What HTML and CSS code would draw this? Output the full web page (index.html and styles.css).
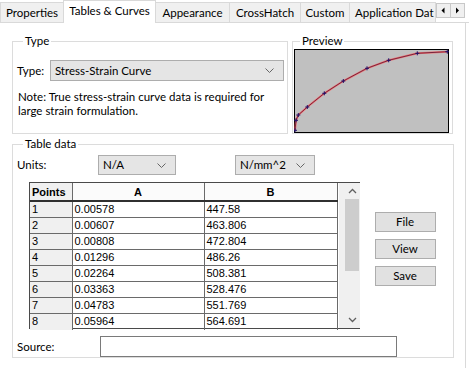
FILE: index.html
```html
<!DOCTYPE html>
<html>
<head>
<meta charset="utf-8">
<link rel="stylesheet" href="styles.css">
</head>
<body>
<div class="tabbar">
  <div class="tab w1">Properties</div>
  <div class="tab active w2">Tables &amp; Curves</div>
  <div class="tab w3">Appearance</div>
  <div class="tab w4">CrossHatch</div>
  <div class="tab w5">Custom</div>
  <div class="tab w6">Application Dat</div>
  <div class="arrows">
    <span class="arr"><svg width="15" height="15" viewBox="0 0 15 15"><path d="M8.5 4.5 L5.5 7.5 L8.5 10.5 Z" fill="#000"/></svg></span>
    <span class="arr"><svg width="15" height="15" viewBox="0 0 15 15"><path d="M6 4.5 L9 7.5 L6 10.5 Z" fill="#000"/></svg></span>
  </div>
</div>
<div class="panel">
  <div class="top-row">
    <fieldset class="grp type-grp">
      <legend>Type</legend>
      <div class="type-row">
        <span class="lbl type-lbl">Type:</span>
        <div class="select type-sel"><span>Stress-Strain Curve</span><svg class="chev" width="9" height="5" viewBox="0 0 9 5"><path d="M0.5 0.5 L4.5 4.5 L8.5 0.5" fill="none" stroke="#666" stroke-width="1"/></svg></div>
      </div>
      <p class="note">Note: True stress-strain curve data is required for<br>large strain formulation.</p>
    </fieldset>
    <fieldset class="grp preview-grp">
      <legend>Preview</legend>
      <svg class="graph" width="155" height="84" viewBox="0 0 155 84">
        <rect x="0.5" y="0.5" width="154" height="83" fill="#c0c0c0" stroke="#000" stroke-width="1"/>
        <polyline points="1,81.3 2,71.3 4.3,66 13.3,58 30.3,44.3 49.3,32 73,19.3 94.7,11.3 123.3,4.3 153.3,2.7" fill="none" stroke="#ff5a5a" stroke-width="2" stroke-opacity="0.75"/>
        <polyline points="1,81.3 2,71.3 4.3,66 13.3,58 30.3,44.3 49.3,32 73,19.3 94.7,11.3 123.3,4.3 153.3,2.7" fill="none" stroke="#5a1030" stroke-width="0.8"/>
        <g stroke="#20106a" stroke-width="1">
          <path d="M-1 81.3h4M1 79.3v4"/>
          <path d="M0 71.3h4M2 69.3v4"/>
          <path d="M2.3 66h4M4.3 64v4"/>
          <path d="M11.3 58h4M13.3 56v4"/>
          <path d="M28.3 44.3h4M30.3 42.3v4"/>
          <path d="M47.3 32h4M49.3 30v4"/>
          <path d="M71 19.3h4M73 17.3v4"/>
          <path d="M92.7 11.3h4M94.7 9.3v4"/>
          <path d="M121.3 4.3h4M123.3 2.3v4"/>
          <path d="M151.3 2.7h4M153.3 0.7v4"/>
        </g>
      </svg>
    </fieldset>
  </div>
  <fieldset class="grp table-grp">
    <legend>Table data</legend>
    <div class="units-row">
      <span class="lbl units-lbl">Units:</span>
      <div class="select na-sel"><span>N/A</span><svg class="chev" width="9" height="5" viewBox="0 0 9 5"><path d="M0.5 0.5 L4.5 4.5 L8.5 0.5" fill="none" stroke="#666" stroke-width="1"/></svg></div>
      <div class="select nmm-sel"><span>N/mm^2</span><svg class="chev" width="9" height="5" viewBox="0 0 9 5"><path d="M0.5 0.5 L4.5 4.5 L8.5 0.5" fill="none" stroke="#666" stroke-width="1"/></svg></div>
    </div>
    <div class="table-area">
      <div class="grid-wrap">
        <table class="grid">
          <colgroup><col class="c-pts"><col class="c-a"><col class="c-b"></colgroup>
          <thead>
            <tr><th class="h-pts">Points</th><th>A</th><th>B</th></tr>
          </thead>
          <tbody>
            <tr><td class="pt">1</td><td>0.00578</td><td>447.58</td></tr>
            <tr><td class="pt">2</td><td>0.00607</td><td>463.806</td></tr>
            <tr><td class="pt">3</td><td>0.00808</td><td>472.804</td></tr>
            <tr><td class="pt">4</td><td>0.01296</td><td>486.26</td></tr>
            <tr><td class="pt">5</td><td>0.02264</td><td>508.381</td></tr>
            <tr><td class="pt">6</td><td>0.03363</td><td>528.476</td></tr>
            <tr><td class="pt">7</td><td>0.04783</td><td>551.769</td></tr>
            <tr><td class="pt">8</td><td>0.05964</td><td>564.691</td></tr>
          </tbody>
        </table>
        <div class="vscroll">
          <svg class="sarrow" width="22" height="16" viewBox="0 0 22 16"><path d="M10 10 L13.5 6.5 L17 10" fill="none" stroke="#606060" stroke-width="1.3"/></svg>
          <div class="thumb"></div>
          <div class="track-rest"></div>
          <svg class="sarrow" width="22" height="16" viewBox="0 0 22 16"><path d="M10 6 L13.5 9.5 L17 6" fill="none" stroke="#606060" stroke-width="1.3"/></svg>
        </div>
      </div>
      <div class="btn-col">
        <button class="btn">File</button>
        <button class="btn">View</button>
        <button class="btn">Save</button>
      </div>
    </div>
    <div class="source-row">
      <span class="lbl source-lbl">Source:</span>
      <div class="input"></div>
    </div>
  </fieldset>
</div>
</body>
</html>
```

FILE: styles.css
```css
* { box-sizing: border-box; }
html, body {
  margin: 0;
  padding: 0;
  background: #ffffff;
}
body {
  width: 469px;
  height: 368px;
  overflow: hidden;
  font-family: Lato, "Noto Sans", sans-serif;
  font-size: 11.5px;
  color: #000;
}

/* tabs */
.tabbar {
  display: flex;
  align-items: flex-end;
  height: 23px;
  width: 469px;
  border-bottom: 1px solid #d9d9d9;
  position: relative;
}
.tab {
  height: 20px;
  background: #f0f0f0;
  border: 1px solid #d9d9d9;
  border-bottom: none;
  margin-right: -1px;
  display: flex;
  align-items: center;
  justify-content: center;
  white-space: nowrap;
  overflow: hidden;
  font-size: 11.5px;
  line-height: 16px;
  padding-top: 1px;
}
.tab.active {
  height: 23px;
  background: #fff;
  margin-bottom: -1px;
  position: relative;
  z-index: 1;
  padding-top: 0;
  padding-bottom: 2px;
}
.w1 { width: 64px; }
.w2 { width: 93px; }
.w3 { width: 75px; }
.w4 { width: 72px; }
.w5 { width: 50px; }
.w6 { width: 87px; justify-content: flex-start; padding-left: 5px; }
.arrows {
  display: flex;
  align-self: flex-start;
  margin-top: 3px;
  margin-left: 1px;
}
.arr {
  width: 15px;
  height: 15px;
  background: #f0f0f0;
  border: 1px solid #c8c8c8;
  margin-right: -1px;
  display: block;
}
.arr svg { display: block; margin: -1px; }

/* panel */
.panel {
  width: 466px;
  height: 345px;
  border-right: 1px solid #d9d9d9;
  padding: 10px 0 0 12px;
}
.top-row {
  display: flex;
  gap: 4px;
  height: 101px;
}
.grp {
  margin: 0;
  border: 1px solid #dcdcdc;
  padding: 0;
  min-width: 0;
}
.grp legend {
  padding: 0 2px;
  margin-left: 6px;
  font-size: 11.5px;
  line-height: 16px;
}
.type-grp {
  width: 276px;
  padding: 11px 3px 0 4px;
}
.type-row {
  display: flex;
  align-items: center;
}
.lbl {
  font-size: 11.5px;
  line-height: 16px;
}
.type-lbl { width: 33px; }
.select {
  height: 21px;
  background: #e5e5e5;
  border: 1px solid #adadad;
  display: flex;
  align-items: center;
  justify-content: space-between;
  padding: 0 9px 0 4px;
  font-size: 11.5px;
  line-height: 16px;
}
.type-sel { width: 235px; }
.chev { display: block; }
.note {
  margin: 9px 0 0 1px;
  font-size: 11.5px;
  line-height: 14px;
  white-space: nowrap;
}
.preview-grp {
  width: 161px;
  padding: 0 0 0 1px;
}
.graph { display: block; }

/* table data */
.table-grp {
  width: 442px;
  height: 222px;
  margin-top: 2px;
  padding: 3px 0 0 4px;
}
.units-row {
  display: flex;
  align-items: center;
  height: 20px;
}
.units-lbl { width: 81px; }
.na-sel { width: 78px; height: 20px; }
.nmm-sel { width: 80px; height: 20px; margin-left: 59px; }
.table-area {
  display: flex;
  margin-top: 7px;
  margin-left: 12px;
}
.grid-wrap {
  display: flex;
  border: 1px solid #4a4a4a;
  border-right: none;
  height: 147px;
}
.grid {
  border-collapse: collapse;
  table-layout: fixed;
  width: 307px;
  font-family: "Liberation Sans", Arial, sans-serif;
  font-size: 11px;
}
.c-pts { width: 42px; }
.c-a { width: 132px; }
.c-b { width: 133px; }
.grid th {
  height: 18px;
  padding: 0 2px;
  font-weight: bold;
  background: #fbfbfb;
  border: 1px solid #6a6a6a;
  border-top: none;
  border-bottom: 2px solid #303030;
  text-align: center;
  line-height: 16px;
}
.grid th.h-pts { background: #f0f0f0; text-align: left; border-left: none; }
.grid td {
  height: 16px;
  padding: 0 0 0 2px;
  border: 1px solid #6a6a6a;
  line-height: 15px;
  white-space: nowrap;
  overflow: hidden;
}
.grid td.pt { background: #f0f0f0; border-left: none; }
.grid tbody tr:last-child td { border-bottom: none; }
.vscroll {
  width: 22px;
  background: #f0f0f0;
  display: flex;
  flex-direction: column;
  border-left: 1px solid #fff;
}
.sarrow { display: block; }
.thumb {
  height: 72px;
  margin-left: 6px;
  width: 14px;
  background: #cdcdcd;
}
.track-rest { flex: 1; }
.btn-col {
  display: flex;
  flex-direction: column;
  gap: 7px;
  margin-left: 15px;
  padding-top: 30px;
}
.btn {
  width: 61px;
  height: 20px;
  background: #e1e1e1;
  border: 1px solid #adadad;
  border-radius: 0;
  padding: 0;
  font-family: Lato, "Noto Sans", sans-serif;
  font-size: 11.5px;
  line-height: 16px;
  color: #000;
}
.source-row {
  display: flex;
  align-items: center;
  margin-top: 7px;
}
.source-lbl { width: 83px; }
.input {
  width: 297px;
  height: 21px;
  border: 1px solid #7a7a7a;
  background: #fff;
}
```
